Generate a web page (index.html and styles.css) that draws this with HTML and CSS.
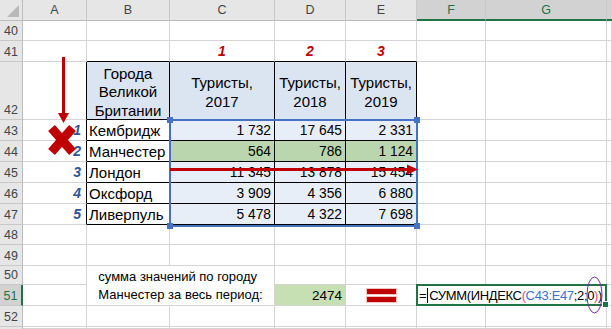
FILE: index.html
```html
<!DOCTYPE html>
<html>
<head>
<meta charset="utf-8">
<link rel="stylesheet" href="styles.css">
</head>
<body>
<div class="wrap">
  <div class="sheet">
    <!-- column headers -->
    <div class="corner"><span class="tri"></span></div>
    <div class="ch">A</div>
    <div class="ch">B</div>
    <div class="ch">C</div>
    <div class="ch">D</div>
    <div class="ch">E</div>
    <div class="ch sel">F</div>
    <div class="ch sel">G</div>
    <div class="ch sel edge"></div>

    <!-- 40 -->
    <div class="rh">40</div>
    <div class="c"></div><div class="c"></div><div class="c"></div><div class="c"></div><div class="c"></div><div class="c"></div><div class="c"></div><div class="c"></div>

    <!-- 41 -->
    <div class="rh">41</div>
    <div class="c"></div>
    <div class="c tb-above"></div>
    <div class="c tb-above mark">1</div>
    <div class="c tb-above mark">2</div>
    <div class="c tb-above mark">3</div>
    <div class="c"></div><div class="c"></div><div class="c"></div>

    <!-- 42 -->
    <div class="rh tall">42</div>
    <div class="c tb-left"></div>
    <div class="c t th">Города<br>Великой<br>Британии</div>
    <div class="c t th">Туристы,<br>2017</div>
    <div class="c t th">Туристы,<br>2018</div>
    <div class="c t th">Туристы,<br>2019</div>
    <div class="c"></div><div class="c"></div><div class="c"></div>

    <!-- 43 -->
    <div class="rh">43</div>
    <div class="c tb-left idx">1</div>
    <div class="c t city">Кембридж</div>
    <div class="c t num">1 732</div>
    <div class="c t num">17 645</div>
    <div class="c t num">2 331</div>
    <div class="c"></div><div class="c"></div><div class="c"></div>

    <!-- 44 -->
    <div class="rh">44</div>
    <div class="c tb-left idx">2</div>
    <div class="c t city">Манчестер</div>
    <div class="c t num green">564</div>
    <div class="c t num green">786</div>
    <div class="c t num green">1 124</div>
    <div class="c"></div><div class="c"></div><div class="c"></div>

    <!-- 45 -->
    <div class="rh">45</div>
    <div class="c tb-left idx">3</div>
    <div class="c t city">Лондон</div>
    <div class="c t num">11 345</div>
    <div class="c t num">13 878</div>
    <div class="c t num">15 454</div>
    <div class="c"></div><div class="c"></div><div class="c"></div>

    <!-- 46 -->
    <div class="rh">46</div>
    <div class="c tb-left idx">4</div>
    <div class="c t city">Оксфорд</div>
    <div class="c t num">3 909</div>
    <div class="c t num">4 356</div>
    <div class="c t num">6 880</div>
    <div class="c"></div><div class="c"></div><div class="c"></div>

    <!-- 47 -->
    <div class="rh">47</div>
    <div class="c tb-left idx">5</div>
    <div class="c t city">Ливерпуль</div>
    <div class="c t num">5 478</div>
    <div class="c t num">4 322</div>
    <div class="c t num">7 698</div>
    <div class="c"></div><div class="c"></div><div class="c"></div>

    <!-- 48 -->
    <div class="rh">48</div>
    <div class="c"></div><div class="c"></div><div class="c"></div><div class="c"></div><div class="c"></div><div class="c"></div><div class="c"></div><div class="c"></div>

    <!-- 49 -->
    <div class="rh">49</div>
    <div class="c"></div><div class="c"></div><div class="c"></div><div class="c"></div><div class="c"></div><div class="c"></div><div class="c"></div><div class="c"></div>

    <!-- 50 -->
    <div class="rh">50</div>
    <div class="c"></div>
    <div class="c note">сумма значений по городу<br>Манчестер за весь период:</div>
    <div class="c"></div><div class="c"></div><div class="c"></div><div class="c"></div><div class="c"></div>

    <!-- 51 -->
    <div class="rh rsel">51</div>
    <div class="c"></div>
    <div class="c num result">2474</div>
    <div class="c eq"><span class="bar"></span><span class="bar"></span></div>
    <div class="c edit"><span class="fx">=<span class="caret"></span>СУММ(ИНДЕКС<span class="p1">(</span><span class="ref">C43:E47</span>;2;0<span class="p1">)</span>)</span><span class="grip"></span></div>
    <div class="c"></div>

    <!-- 52 -->
    <div class="rh">52</div>
    <div class="c"></div><div class="c"></div><div class="c"></div><div class="c"></div><div class="c"></div><div class="c"></div><div class="c"></div><div class="c"></div>

    <!-- 53 -->
    <div class="rh"></div>
    <div class="c"></div><div class="c"></div><div class="c"></div><div class="c"></div><div class="c"></div><div class="c"></div><div class="c"></div><div class="c"></div>
  </div>

  <div class="range">
    <span class="h h1"></span><span class="h h2"></span><span class="h h3"></span><span class="h h4"></span>
  </div>

  <svg class="marks" width="612" height="329" viewBox="0 0 612 329">
    <rect x="62" y="57" width="3" height="58" fill="#c00000"/>
    <polygon points="58,113 69,113 63.5,123" fill="#c00000"/>
    <line x1="51.5" y1="128" x2="72.5" y2="152" stroke="#c00000" stroke-width="9"/>
    <line x1="72.5" y1="128" x2="51.5" y2="152" stroke="#c00000" stroke-width="9"/>
    <rect x="170" y="168" width="238" height="3" fill="#c00000"/>
    <polygon points="407,164.5 418,169.5 407,174.5" fill="#c00000"/>
    <ellipse cx="594.5" cy="295" rx="7.5" ry="18" fill="none" stroke="#7030a0" stroke-width="1"/>
  </svg>
</div>
</body>
</html>
```

FILE: styles.css
```css
html, body {
  margin: 0;
  padding: 0;
  background: #ffffff;
}

.wrap {
  position: relative;
  width: 612px;
  height: 329px;
  overflow: hidden;
}

.sheet {
  display: grid;
  grid-template-columns: 23px 64px 83px 105px 71px 71px 69px 121px 5px;
  grid-template-rows: 21px 20px 21px 58px 21px 21px 21px 21px 21px 20px 21px 19px 21px 21px 2px;
  font-family: "Liberation Sans", Arial, sans-serif;
  font-size: 15px;
  color: #000;
}

.sheet > div {
  box-sizing: border-box;
  min-width: 0;
  overflow: hidden;
}

.c {
  border-right: 1px solid #d4d4d4;
  border-bottom: 1px solid #d4d4d4;
  background: #fff;
  display: flex;
  align-items: center;
}

.corner {
  background: #e6e6e6;
  border-right: 1px solid #bdbdbd;
  border-bottom: 1px solid #bdbdbd;
  position: relative;
}
.tri {
  position: absolute;
  right: 3px;
  bottom: 3px;
  width: 0;
  height: 0;
  border-left: 12px solid transparent;
  border-bottom: 12px solid #b9b9b9;
}

.ch {
  background: #e6e6e6;
  border-right: 1px solid #c8c8c8;
  border-bottom: 1px solid #bdbdbd;
  display: flex;
  align-items: center;
  justify-content: center;
  font-size: 12.5px;
  color: #444;
}
.ch.sel {
  background: #d2d2d2;
  color: #217346;
  border-bottom: 2px solid #217346;
}
.ch.edge { border-right: none; }

.rh {
  background: #e6e6e6;
  border-right: 1px solid #bdbdbd;
  border-bottom: 1px solid #c8c8c8;
  display: flex;
  align-items: flex-end;
  justify-content: center;
  padding-bottom: 2px;
  font-size: 12.5px;
  color: #444;
}
.rh.rsel {
  background: #d2d2d2;
  color: #217346;
  border-right: 2px solid #217346;
}

/* table */
.tb-above { border-bottom-color: #000; }
.tb-left { border-right-color: #000; }
.t {
  border-right: 1px solid #000;
  border-bottom: 1px solid #000;
}
.th {
  background: #dbe4f1;
  justify-content: center;
  text-align: center;
  line-height: 18.5px;
  padding-top: 4px;
}
.city {
  padding-left: 2px;
  font-size: 15px;
}
.num {
  justify-content: flex-end;
  padding-right: 3px;
  background: #e8eef7;
  font-size: 13.8px;
}
.green { background: #bad6ae; }

.mark {
  justify-content: center;
  color: #c00000;
  font-weight: bold;
  font-style: italic;
  font-size: 14px;
}
.idx {
  justify-content: flex-end;
  padding-right: 5px;
  color: #2f5597;
  font-weight: bold;
  font-style: italic;
  font-size: 14px;
}

.note {
  grid-column: span 2;
  grid-row: span 2;
  justify-content: center;
  align-items: flex-end;
  font-size: 13px;
  line-height: 18px;
  padding-bottom: 1px;
}

.result {
  background: #c6e0b4;
  font-size: 13.5px;
}

.eq {
  flex-direction: column;
  justify-content: center;
  gap: 3px;
}
.bar {
  display: block;
  width: 29px;
  height: 5px;
  background: #c00000;
  box-shadow: 0 0 0 1px #f2c4c4;
}

.edit {
  grid-column: span 2;
  position: relative;
  border: 2px solid #217346;
  margin: -1px 0 0 -1px;
  padding-left: 1px;
  overflow: visible !important;
  font-size: 13px;
  letter-spacing: -0.35px;
  white-space: nowrap;
}
.caret {
  display: inline-block;
  width: 1px;
  height: 15px;
  background: #000;
  vertical-align: -3px;
  margin: 0 1px;
}
.p1 { color: #e0506e; }
.ref { color: #3d72c9; }
.grip {
  position: absolute;
  right: -4px;
  bottom: -4px;
  width: 5px;
  height: 5px;
  background: #217346;
  border: 1px solid #fff;
}

/* overlays */
.range {
  position: absolute;
  left: 169px;
  top: 119px;
  width: 249px;
  height: 108px;
  box-sizing: border-box;
  border: 2px solid #4472c4;
  pointer-events: none;
}
.h {
  position: absolute;
  width: 6px;
  height: 6px;
  background: #4472c4;
}
.h1 { left: -4px; top: -4px; }
.h2 { right: -4px; top: -4px; }
.h3 { left: -4px; bottom: -4px; }
.h4 { right: -4px; bottom: -4px; }

.marks {
  position: absolute;
  left: 0;
  top: 0;
  pointer-events: none;
}
```
